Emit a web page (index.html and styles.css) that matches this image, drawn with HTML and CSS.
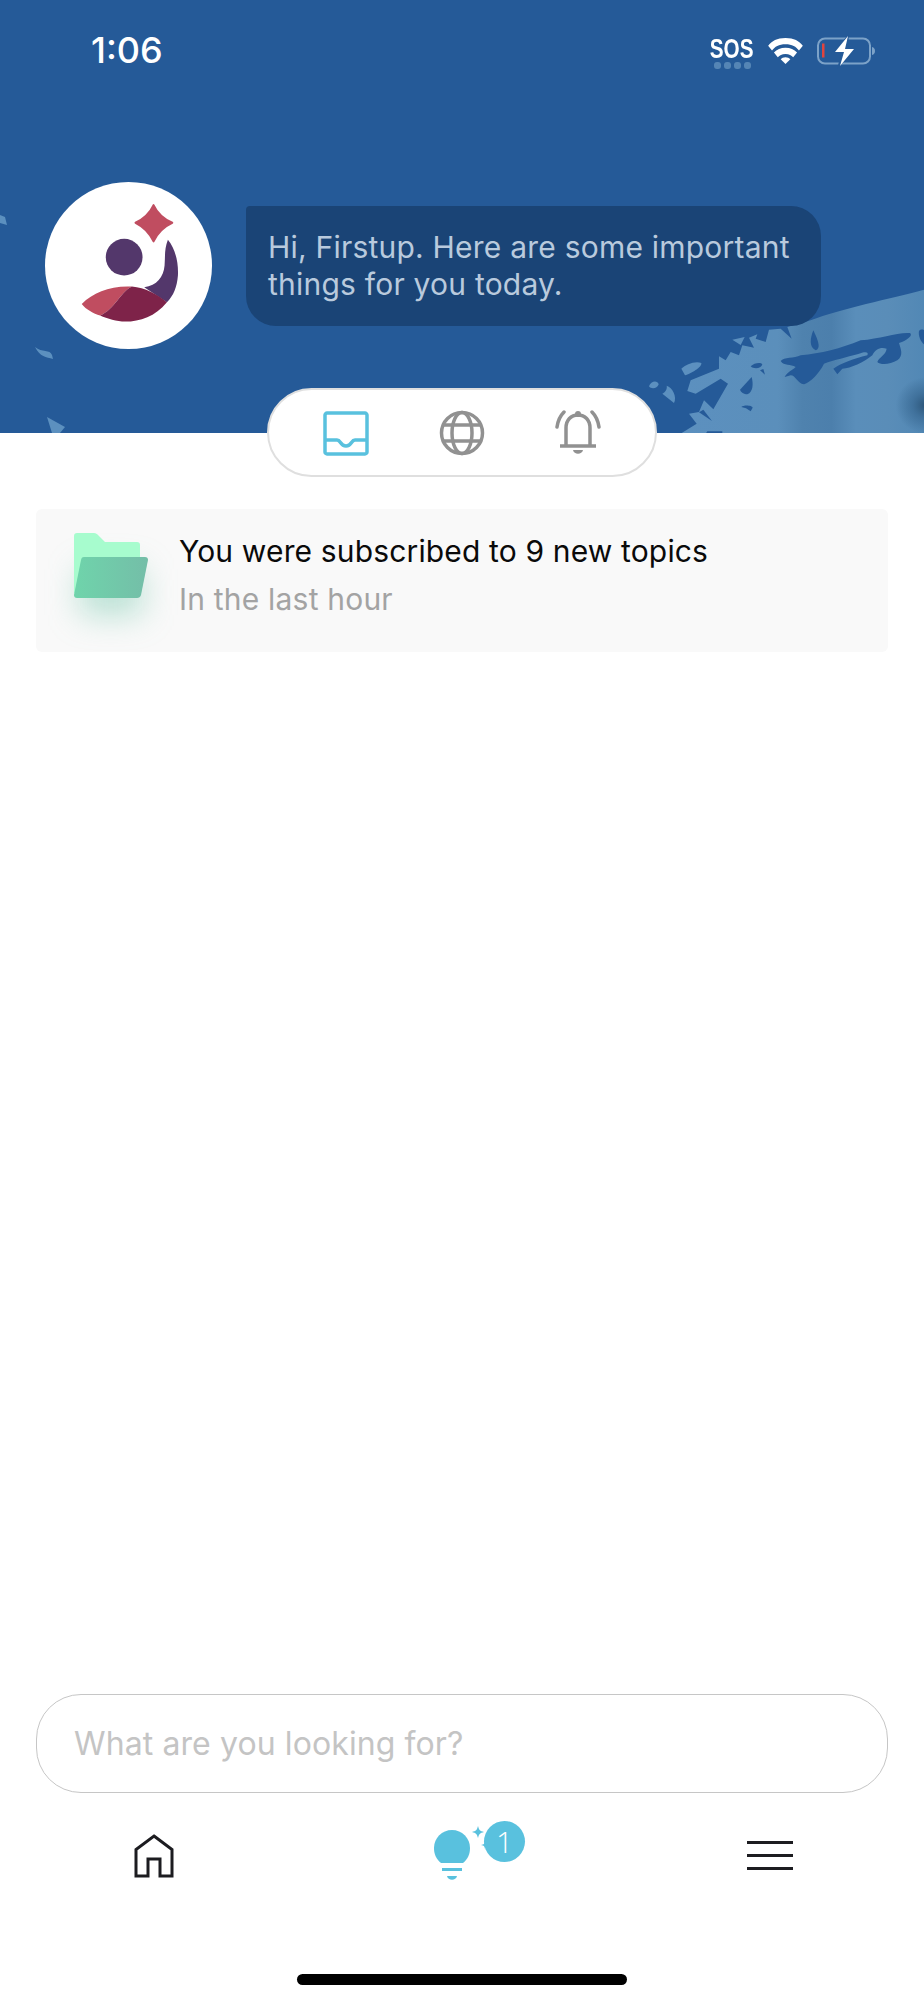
FILE: index.html
```html
<!DOCTYPE html>
<html lang="en">
<head>
<meta charset="utf-8">
<title>Firstup</title>
<link rel="stylesheet" href="styles.css">
</head>
<body>
<div class="app">
  <header class="hero">
    <svg class="art art-right" viewBox="0 0 900 520" aria-hidden="true">
      <defs>
        <linearGradient id="band" x1="0" y1="0" x2="1" y2="0">
          <stop offset="0" stop-color="#5c90bf"/>
          <stop offset=".4" stop-color="#5b8fbb"/>
          <stop offset=".5" stop-color="#4f82ae"/>
          <stop offset=".62" stop-color="#4c7fac"/>
          <stop offset=".72" stop-color="#5a8eba"/>
          <stop offset=".85" stop-color="#5a8db8"/>
          <stop offset="1" stop-color="#5288b5"/>
        </linearGradient>
        <radialGradient id="spot">
          <stop offset="0" stop-color="#2c5578"/>
          <stop offset=".45" stop-color="#3a6a94" stop-opacity=".75"/>
          <stop offset="1" stop-color="#3a6a94" stop-opacity="0"/>
        </radialGradient>
      </defs>
      <path fill="url(#band)" d="M900 88C800 115 650 145 560 180L490 200L503 235L470 205L435 208L425 245L395 235L400 222L375 232L390 262L355 255L345 285L320 275L305 300L285 288L285 325L200 360L190 392L215 400L290 355L312 370L268 447L240 420L225 455L195 460L218 490L170 520H900Z"/>
      <ellipse fill="url(#spot)" cx="905" cy="435" rx="90" ry="85"/>
      <g fill="#255a98">
        <path d="M568 210C558 235 555 260 575 270C590 265 585 245 568 210Z"/>
        <path d="M470 302C480 290 510 295 530 285C590 280 650 265 710 240C770 235 820 215 858 218C868 225 850 240 825 248C830 265 840 285 820 300C800 312 770 315 760 305C765 290 785 285 788 265C770 260 755 265 745 285C720 305 680 325 655 325L640 342L628 325C650 310 690 295 730 285C735 275 725 272 700 282C670 290 630 300 600 310C585 340 560 365 540 372C520 370 515 345 500 345L482 350C490 335 505 330 515 320C500 310 480 318 470 302Z"/>
        <path d="M885 212C890 205 900 208 900 210V252C890 245 882 225 885 212Z"/>
        <path d="M380 318C390 308 410 305 415 312C412 325 390 328 380 318Z"/>
        <path d="M408 330L418 326L423 343Z"/>
        <path d="M348 388L383 350C388 370 388 395 370 402C360 402 350 395 348 388Z"/>
        <path d="M352 440C360 432 385 435 386 442L380 453L366 444Z"/>
        <path d="M225 456L238 448L264 482Z"/>
        <path d="M245 520L250 513H295V520Z"/>
      </g>
      <g fill="#5c90bf">
        <path d="M172 325C185 312 215 300 232 308C235 320 200 340 183 345Z"/>
        <path d="M75 378C80 362 100 358 104 372C100 385 82 388 75 378Z"/>
        <path d="M115 400C125 395 130 385 128 376C145 380 160 410 150 428Z"/>
        <path d="M325 238L362 230L350 254Z"/>
      </g>
    </svg>
    <svg class="art art-left" viewBox="0 0 70 220" aria-hidden="true">
      <g fill="#5c90bf">
        <path d="M0 0L5 2L7 10L0 8Z"/>
        <path d="M35 132C42 138 50 134 52 140L53 144C46 142 40 142 35 132Z"/>
        <path d="M47 202L65 212L60 218H52Z"/>
      </g>
    </svg>
    <div class="status">
      <span class="clock">1:06</span>
      <div class="status-right">
        <div class="sos">
          <span class="sos-text">SOS</span>
          <span class="sos-dots"><i></i><i></i><i></i><i></i></span>
        </div>
        <svg class="wifi" viewBox="0 0 36 27" aria-hidden="true">
          <path fill="#fff" d="M18 0C27 0 32 3 36 8L32 13C29 9 25 6.500 18 6.500S7 9 4 13L0 8C4 3 9 0 18 0Z"/>
          <path fill="#fff" d="M18 10C23 10 27 12 30 15L26 20C24 18 22 16.500 18 16.500S12 18 10 20L6 15C9 12 13 10 18 10Z"/>
          <path fill="#fff" d="M18 20C20 20 22 21 23 22L18 27L13 22C14 21 16 20 18 20Z"/>
        </svg>
        <svg class="battery" viewBox="0 0 58 28" aria-hidden="true">
          <rect x="1" y="1.500" width="52" height="25" rx="7" fill="none" stroke="#7ca2c8" stroke-width="2"/>
          <path fill="#7ca2c8" d="M55 10C57 10.500 58 12 58 14S57 17.500 55 18Z"/>
          <rect x="5" y="6.500" width="2.500" height="14" fill="#e0443e"/>
          <path fill="#255a98" d="M32 -3L14 17H24L20 32L41 10H31Z"/>
          <path fill="#fff" d="M31 -1L18 15H27L23 29L37 12H28Z"/>
        </svg>
      </div>
    </div>
    <div class="greeting">
      <div class="avatar">
        <svg viewBox="135 65 500 500" aria-hidden="true">
          <path fill="#c04d60" stroke="#c04d60" stroke-width="6" stroke-linejoin="round" d="M460 134C472 160 490 175 516 187C490 199 472 216 460 243C448 216 430 199 406 187C430 175 448 160 460 134Z"/>
          <circle fill="#53376b" cx="372" cy="290" r="55"/>
          <path fill="#53376b" d="M503 238C525 265 535 305 533 345C530 380 520 405 500 425L432 380C470 375 490 350 493 315C495 290 492 265 503 238Z"/>
          <path fill="#c04d60" d="M245 430C280 395 330 375 395 378C360 395 345 445 300 465C280 458 258 447 245 430Z"/>
          <path fill="#7e2349" d="M395 378C435 382 470 400 500 425C465 468 420 483 375 483C350 483 322 475 300 465C345 445 360 395 395 378Z"/>
        </svg>
      </div>
      <p class="bubble">Hi, Firstup. Here are some important things for you today.</p>
    </div>
  </header>

  <nav class="tabs">
    <svg class="tab-icon" viewBox="0 0 46 46" aria-hidden="true">
      <path fill="none" stroke="#59c1de" stroke-width="3.500" stroke-linejoin="round" d="M4 3H42C43 3 44 4 44 5V42C44 43 43 44 42 44H4C3 44 2 43 2 42V5C2 4 3 3 4 3Z"/>
      <path fill="none" stroke="#59c1de" stroke-width="3.500" d="M2 30H14C18 30 17 36 23 36S28 30 32 30H44"/>
    </svg>
    <svg class="tab-icon" viewBox="0 0 46 46" aria-hidden="true">
      <g fill="none" stroke="#919191" stroke-width="3.500">
        <circle cx="23" cy="23" r="20.500"/>
        <ellipse cx="23" cy="23" rx="10" ry="20.500"/>
        <path d="M4 15H42M4 31H42"/>
      </g>
    </svg>
    <svg class="tab-icon" viewBox="0 0 46 46" aria-hidden="true">
      <g fill="none" stroke="#919191" stroke-width="3.500">
        <path d="M11 36V18C11 10 16 5 23 5S35 10 35 18V36"/>
        <path d="M5 36H41"/>
        <path stroke-linecap="round" d="M2 17C3 10 5 6 9 2M44 17C43 10 41 6 37 2"/>
      </g>
      <circle cx="23" cy="4" r="3" fill="#919191"/>
      <path fill="#919191" d="M18 40H28C27 45 19 45 18 40Z"/>
    </svg>
  </nav>

  <main class="feed">
    <article class="card">
      <div class="folder">
        <span class="folder-glow"></span>
        <svg viewBox="0 0 74 65" aria-hidden="true">
          <defs>
            <linearGradient id="folderFront" x1="0" y1="0" x2="1" y2="0">
              <stop offset="0" stop-color="#6fd4ab"/>
              <stop offset="1" stop-color="#74bea8"/>
            </linearGradient>
          </defs>
          <path fill="#a7fcce" d="M3 0H20C22 0 23 1 24 2L31 9H63C65 9 66 10 66 12V60H0V3C0 1 1 0 3 0Z"/>
          <path fill="url(#folderFront)" d="M10 24H71C73 24 74 25 74 27L67 62C66.500 64 65 65 63 65H3C1 65 0 64 0 62L7 27C7.500 25 8 24 10 24Z"/>
        </svg>
      </div>
      <div class="card-text">
        <h2 class="card-title">You were subscribed to 9 new topics</h2>
        <p class="card-sub">In the last hour</p>
      </div>
    </article>
  </main>

  <footer class="footer">
    <div class="search">What are you looking for?</div>
    <div class="bottom-nav">
      <div class="nav-cell">
        <svg class="home" viewBox="0 0 40 44" aria-hidden="true">
          <path fill="none" stroke="#1c1c20" stroke-width="3" d="M20 2L38 15.500V42H26V25H14V42H2V15.500Z"/>
        </svg>
      </div>
      <div class="nav-cell">
        <div class="ideas">
          <svg class="bulb" viewBox="0 0 60 60" aria-hidden="true">
            <path fill="#59c1de" d="M9 42C4 38 2 33 2 27C2 17 10 9 20 9S38 17 38 27C38 33 36 38 31 42Z"/>
            <rect x="10" y="47" width="20" height="3" fill="#59c1de"/>
            <path fill="#59c1de" d="M15 55H25C24 60 16 60 15 55Z"/>
            <path fill="#59c1de" d="M46 5C47 9 48 10 52 11C48 12 47 13 46 17C45 13 44 12 40 11C44 10 45 9 46 5Z"/>
            <path fill="#59c1de" d="M53 20C53.500 23 54 23.500 57 24C54 24.500 53.500 25 53 28C52.500 25 52 24.500 49 24C52 23.500 52.500 23 53 20Z"/>
          </svg>
          <span class="badge">1</span>
        </div>
      </div>
      <div class="nav-cell">
        <div class="menu"><i></i><i></i><i></i></div>
      </div>
    </div>
    <div class="home-bar"></div>
  </footer>
</div>
</body>
</html>
```
FILE: styles.css
```css
* { box-sizing: border-box; }
html, body { margin: 0; padding: 0; background: #fff; }
body { font-family: Inter, "Liberation Sans", sans-serif; }

.app {
  position: relative;
  width: 924px;
  height: 2000px;
  display: flex;
  flex-direction: column;
  overflow: hidden;
}

.hero {
  position: relative;
  height: 433px;
  background: #255a98;
  flex: none;
  overflow: hidden;
}
.art { position: absolute; display: block; }
.art-right { left: 624px; top: 260px; width: 300px; height: 174px; }
.art-left { left: 0; top: 215px; width: 70px; height: 220px; }

.status {
  position: relative;
  display: flex;
  justify-content: space-between;
  padding: 30px 49px 0 91px;
  height: 182px;
}
.clock { color: #fff; font-size: 36px; line-height: 40px; font-weight: 500; }
.status-right { display: flex; gap: 14px; align-items: flex-start; padding-top: 7px; }
.sos { width: 44px; display: flex; flex-direction: column; align-items: center; }
.sos-text {
  color: #fff;
  font: 700 28px/24px "Liberation Sans", sans-serif;
  transform: scaleX(.74);
}
.sos-dots { display: flex; gap: 3px; margin-top: 1px; }
.sos-dots i { width: 7px; height: 7px; border-radius: 3px; background: #5585b5; }
.wifi { width: 35px; height: 26px; display: block; margin-top: 1px; }
.battery { width: 58px; height: 28px; display: block; overflow: visible; }

.greeting {
  position: relative;
  display: flex;
  align-items: flex-start;
  padding-left: 45px;
  gap: 34px;
}
.avatar {
  width: 167px;
  height: 167px;
  border-radius: 50%;
  background: #fff;
  flex: none;
}
.avatar svg { display: block; width: 100%; height: 100%; }
.bubble {
  margin: 24px 0 0;
  width: 575px;
  height: 120px;
  padding: 23px 22px 0;
  background: #1a4476;
  border-radius: 4px 30px 30px 30px;
  color: #b9cadd;
  font-size: 30px;
  letter-spacing: .22px;
  line-height: 37px;
}

.tabs {
  position: relative;
  flex: none;
  align-self: center;
  width: 390px;
  height: 89px;
  margin: -45px 0 0;
  display: flex;
  align-items: center;
  justify-content: center;
  gap: 70px;
  background: #fff;
  border: 2px solid #dfdfdf;
  border-radius: 45px;
}
.tab-icon { width: 46px; height: 46px; display: block; }

.feed { flex: 1; padding: 32px 36px 0; }
.card {
  height: 143px;
  display: flex;
  background: #f9f9f9;
  border-radius: 6px;
  padding: 24px 0 0 38px;
  gap: 31px;
}
.folder { position: relative; width: 74px; height: 65px; flex: none; }
.folder svg { position: relative; display: block; width: 74px; height: 65px; }
.folder-glow {
  position: absolute;
  left: 6px;
  top: 36px;
  width: 62px;
  height: 46px;
  background: rgba(95, 190, 160, .42);
  filter: blur(16px);
}
.card-title { margin: 0; font-size: 30px; letter-spacing: .15px; line-height: 36px; font-weight: 400; color: #0a0a0a; }
.card-sub { margin: 12px 0 0; font-size: 30px; letter-spacing: .2px; line-height: 36px; color: #a3a3a3; }

.footer { flex: none; padding: 0 36px; }
.search {
  height: 99px;
  border: 1px solid #c6c6c6;
  border-radius: 45px;
  padding-left: 37px;
  display: flex;
  align-items: center;
  font-size: 32px;
  letter-spacing: .1px;
  color: #c4c4c4;
}
.bottom-nav {
  display: grid;
  grid-template-columns: repeat(3, 308px);
  margin: 0 -36px;
  height: 207px;
  padding-top: 28px;
  align-items: start;
}
.nav-cell { display: flex; justify-content: center; }
.home { width: 40px; height: 44px; display: block; margin-top: 13px; }
.ideas { position: relative; width: 60px; height: 60px; }
.bulb { display: block; width: 60px; height: 60px; }
.badge {
  position: absolute;
  left: 52px;
  top: 0;
  width: 41px;
  height: 41px;
  border-radius: 50%;
  background: #59c1de;
  color: #fff;
  font: 300 30px/41px "Open Sans", sans-serif;
  text-align: center;
}
.menu { width: 46px; display: flex; flex-direction: column; gap: 10px; margin-top: 20px; }
.menu i { display: block; height: 3px; background: #1c1c20; }
.home-bar {
  width: 330px;
  height: 11px;
  border-radius: 6px;
  background: #000;
  position: absolute;
  left: 297px;
  top: 1974px;
}
```
